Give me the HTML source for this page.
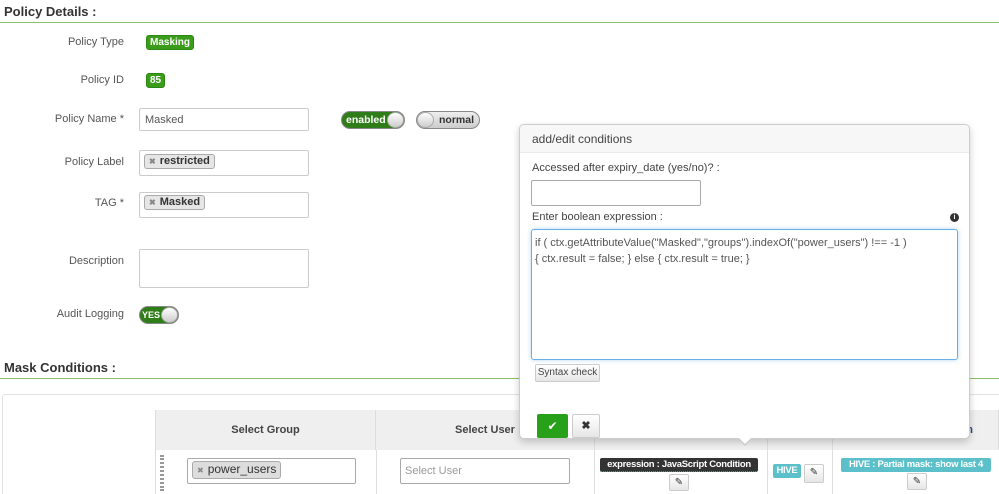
<!DOCTYPE html>
<html style="height:494px;overflow:hidden"><head><style>
*{box-sizing:border-box;margin:0;padding:0}
html,body{width:999px;height:494px;overflow:hidden}
body{background:#fff;font-family:"Liberation Sans",sans-serif;color:#333;position:relative;font-size:11px}
.a{position:absolute}
.h{font-weight:bold;font-size:13px;color:#333}
.line{height:1px;background:#8cc063;left:0;width:999px}
.lbl{width:124px;text-align:right;left:0;font-size:11px;color:#555}
.badge{background:#3b9c1c;color:#fff;font-weight:bold;font-size:10px;border-radius:3px;padding:1px 3px;line-height:11px;border:1px solid #2e8714}
.inp{border:1px solid #ccc;border-radius:2px;background:#fff}
.tag{border:1px solid #aaa;border-radius:3px;background:#e6e6e6;font-weight:bold;font-size:11px;padding:0 4px;line-height:13px;color:#333}
.tag i{font-style:normal;color:#888;font-size:8px;margin-right:4px}
.tog{border-radius:9px;height:18px;border:1px solid #888;overflow:hidden;white-space:nowrap}
.knob{position:absolute;top:0;width:17px;height:16px;border-radius:50%;background:linear-gradient(#fff,#ccc);border:1px solid #aaa}
.btn{border:1px solid #ccc;border-radius:2px;background:linear-gradient(#fff,#e6e6e6)}
.th{background:#efefef;border-right:1px solid #ddd;text-align:center;font-weight:bold;font-size:11px;line-height:40px;color:#444;top:410px;height:40px}
.pen{width:20px;height:17px;font-size:10px;text-align:center;line-height:15px;color:#333}
.lab{white-space:nowrap;overflow:hidden;letter-spacing:-0.3px}
</style></head><body>
<div class="a h" style="left:4px;top:4px">Policy Details :</div>
<div class="a line" style="top:22px"></div>
<div class="a lbl" style="top:36px">Policy Type</div>
<div class="a badge" style="left:146px;top:35px">Masking</div>
<div class="a lbl" style="top:74px">Policy ID</div>
<div class="a badge" style="left:146px;top:73px">85</div>
<div class="a lbl" style="top:113px">Policy Name *</div>
<div class="a inp" style="left:139px;top:108px;width:170px;height:23px;padding:5px;color:#555">Masked</div>
<div class="a tog" style="left:341px;top:111px;width:64px;background:#2f7d18;color:#fff;font-weight:bold;line-height:16px;padding-left:4px;font-size:10.5px">enabled<div class="knob" style="right:0"></div></div>
<div class="a tog" style="left:416px;top:111px;width:64px;background:linear-gradient(#eee,#ccc);color:#333;font-weight:bold;line-height:16px;padding-left:22px;font-size:10.5px">normal<div class="knob" style="left:0"></div></div>
<div class="a lbl" style="top:156px">Policy Label</div>
<div class="a inp" style="left:139px;top:150px;width:170px;height:26px"></div>
<div class="a tag" style="left:144px;top:154px"><i>✖</i>restricted</div>
<div class="a lbl" style="top:197px">TAG *</div>
<div class="a inp" style="left:139px;top:192px;width:170px;height:26px"></div>
<div class="a tag" style="left:144px;top:195px"><i>✖</i>Masked</div>
<div class="a lbl" style="top:255px">Description</div>
<div class="a inp" style="left:139px;top:249px;width:170px;height:39px"></div>
<div class="a lbl" style="top:308px">Audit Logging</div>
<div class="a tog" style="left:139px;top:306px;width:40px;background:#2f7d18;color:#fff;font-weight:bold;font-size:9px;line-height:16px;padding-left:2px">YES<div class="knob" style="right:0"></div></div>
<div class="a h" style="left:4px;top:360px">Mask Conditions :</div>
<div class="a line" style="top:378px"></div>
<div class="a" style="left:2px;top:394px;width:1000px;height:105px;border:1px solid #e3e3e3;border-radius:3px"></div>
<div class="a" style="left:155px;top:410px;width:845px;height:90px;border:1px solid #ddd"></div>
<div class="a th" style="left:156px;width:220px">Select Group</div>
<div class="a th" style="left:376px;width:219px">Select User</div>
<div class="a th" style="left:595px;width:173px"></div>
<div class="a th" style="left:768px;width:65px"></div>
<div class="a th" style="left:833px;width:166px;text-align:right;padding-right:25px;color:#2a4a8a">n</div>
<div class="a" style="left:376px;top:450px;width:1px;height:44px;background:#ddd"></div>
<div class="a" style="left:594px;top:450px;width:1px;height:44px;background:#ddd"></div>
<div class="a" style="left:767px;top:450px;width:1px;height:44px;background:#ddd"></div>
<div class="a" style="left:832px;top:450px;width:1px;height:44px;background:#ddd"></div>
<div class="a" style="left:160px;top:455px;width:4px;height:36px;border-left:2px dotted #999;border-right:2px dotted #999"></div>
<div class="a inp" style="left:187px;top:458px;width:169px;height:26px;border-color:#aaa"></div>
<div class="a tag" style="left:192px;top:461px;font-weight:normal;font-size:12px;line-height:15px;background:#ddd"><i>✖</i>power_users</div>
<div class="a inp" style="left:400px;top:458px;width:170px;height:26px;border-color:#aaa;padding:6px 4px;color:#999;font-size:11px">Select User</div>
<div class="a lab" style="left:600px;top:458px;width:158px;height:14px;background:#333;color:#fff;font-weight:bold;font-size:9.5px;line-height:14px;text-align:center;border-radius:2px;border-bottom:1px dotted #4aa">expression : JavaScript Condition</div>
<div class="a btn pen" style="left:669px;top:474px">✎</div>
<div class="a lab" style="left:773px;top:464px;width:28px;height:14px;background:#5bc0c9;color:#fff;font-weight:bold;font-size:9.5px;line-height:14px;text-align:center;border-radius:2px">HIVE</div>
<div class="a btn pen" style="left:804px;top:464px;height:19px">✎</div>
<div class="a lab" style="left:841px;top:458px;width:150px;height:14px;background:#5bc0c9;color:#fff;font-weight:bold;font-size:9.5px;line-height:14px;text-align:center;border-radius:2px">HIVE : Partial mask: show last 4</div>
<div class="a btn pen" style="left:907px;top:473px">✎</div>

<div class="a" style="left:519px;top:124px;width:451px;height:315px;background:#fff;border:1px solid #ccc;border-radius:5px;box-shadow:0 3px 8px rgba(0,0,0,.2)">
 <div style="height:28px;background:#f7f7f7;border-bottom:1px solid #ebebeb;padding:7px 12px;font-size:12px;color:#444;border-radius:5px 5px 0 0">add/edit conditions</div>
 <div class="a" style="left:12px;top:37px;font-size:11px;color:#444">Accessed after expiry_date (yes/no)? :</div>
 <div class="a inp" style="left:11px;top:55px;width:170px;height:26px;border-color:#aaa"></div>
 <div class="a" style="left:12px;top:86px;font-size:11px;color:#444">Enter boolean expression :</div>
 <div class="a" style="left:430px;top:88px;width:9px;height:9px;border-radius:50%;background:#333;color:#fff;font-size:7px;line-height:9px;text-align:center;font-weight:bold">i</div>
 <div class="a" style="left:11px;top:104px;width:427px;height:131px;border:1px solid #66afe9;border-radius:3px;box-shadow:0 0 4px rgba(102,175,233,.5);padding:5px 3px;font-size:11px;line-height:16px;color:#555">if ( ctx.getAttributeValue("Masked","groups").indexOf("power_users") !== -1 )<br>{ ctx.result = false; } else { ctx.result = true; }</div>
 <div class="a btn" style="left:15px;top:239px;width:65px;height:18px;font-size:10px;text-align:center;line-height:16px;color:#444">Syntax check</div>
 <div class="a" style="left:17px;top:289px;width:31px;height:24px;background:#28a019;border-radius:2px;color:#fff;text-align:center;line-height:24px;font-size:12px">✔</div>
 <div class="a btn" style="left:52px;top:289px;width:28px;height:24px;text-align:center;line-height:22px;font-size:11px;font-weight:bold">✖</div>
</div>
<div class="a" style="left:737px;top:438px;width:0;height:0;border-left:8px solid transparent;border-right:8px solid transparent;border-top:8px solid #ccc"></div>
<div class="a" style="left:738px;top:437px;width:0;height:0;border-left:7px solid transparent;border-right:7px solid transparent;border-top:7px solid #fff"></div>
</body></html>
